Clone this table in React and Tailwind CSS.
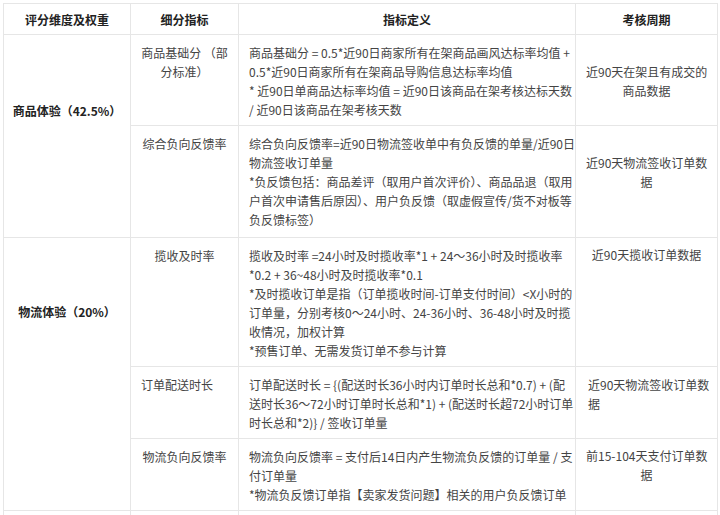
const rows1 = [
  {
    sub: ["商品基础分 （部", "分标准）"],
    subAlign: "text-center",
    def: [
      "商品基础分 = 0.5*近90日商家所有在架商品画风达标率均值 +",
      "0.5*近90日商家所有在架商品导购信息达标率均值",
      "* 近90日单商品达标率均值 = 近90日该商品在架考核达标天数",
      "/ 近90日该商品在架考核天数",
    ],
    period: ["近90天在架且有成交的", "商品数据"],
    periodCls: "text-center pt-[27px]",
    h: "h-[91px]",
  },
  {
    sub: ["综合负向反馈率"],
    subAlign: "text-center",
    def: [
      "综合负向反馈率=近90日物流签收单中有负反馈的单量/近90日",
      "物流签收订单量",
      "*负反馈包括：商品差评（取用户首次评价）、商品品退（取用",
      "户首次申请售后原因）、用户负反馈（取虚假宣传/货不对板等",
      "负反馈标签）",
    ],
    period: ["近90天物流签收订单数", "据"],
    periodCls: "text-center pt-[27px]",
    h: "h-[112px]",
  },
];

const rows2 = [
  {
    sub: ["揽收及时率"],
    subAlign: "text-center",
    def: [
      "揽收及时率 =24小时及时揽收率*1 + 24～36小时及时揽收率",
      "*0.2 + 36~48小时及时揽收率*0.1",
      "*及时揽收订单是指（订单揽收时间-订单支付时间）<X小时的",
      "订单量，分别考核0～24小时、24-36小时、36-48小时及时揽",
      "收情况，加权计算",
      "*预售订单、无需发货订单不参与计算",
    ],
    period: ["近90天揽收订单数据"],
    periodCls: "text-center pt-[7px]",
    h: "h-[128px]",
  },
  {
    sub: ["订单配送时长"],
    subAlign: "text-left",
    def: [
      "订单配送时长 = {(配送时长36小时内订单时长总和*0.7) + (配",
      "送时长36～72小时订单时长总和*1) + (配送时长超72小时订单",
      "时长总和*2)} / 签收订单量",
    ],
    period: ["近90天物流签收订单数", "据"],
    periodCls: "text-left pl-[12px] pt-[8px]",
    h: "h-[72px]",
  },
  {
    sub: ["物流负向反馈率"],
    subAlign: "text-center",
    def: [
      "物流负向反馈率 = 支付后14日内产生物流负反馈的订单量 / 支",
      "付订单量",
      "*物流负反馈订单指【卖家发货问题】相关的用户负反馈订单",
    ],
    period: ["前15-104天支付订单数", "据"],
    periodCls: "text-center pt-[7px]",
    h: "h-[71px]",
  },
];

const cell = "border border-[#e6e6e6] align-top px-[10px] pb-[6px]";

const Lines = ({ lines }) =>
  lines.map((l, i) => (
    <div key={i} className="whitespace-nowrap">
      {l}
    </div>
  ));

const Rows = ({ data, group, groupPad }) =>
  data.map((r, i) => (
    <tr key={i} className={r.h}>
      {i === 0 && (
        <td
          rowSpan={data.length}
          className={`border border-[#e6e6e6] align-top px-[4px] whitespace-nowrap ${groupPad} text-center font-bold text-[#222]`}
        >
          {group}
        </td>
      )}
      <td className={`${cell} pt-[8px] ${r.subAlign}`}>
        <Lines lines={r.sub} />
      </td>
      <td className={`${cell} pt-[8px] text-left`}>
        <Lines lines={r.def} />
      </td>
      <td className={`${cell} ${r.periodCls}`}>
        <Lines lines={r.period} />
      </td>
    </tr>
  ));

export default function App() {
  return (
    <div className="w-[720px] h-[515px] overflow-hidden bg-white pt-[3px] pl-[3px] font-['Noto_Sans_CJK_SC','Microsoft_YaHei',sans-serif] text-[12px] leading-[19px] text-[#444]">
      <table className="table-fixed border-collapse w-[714px]">
        <colgroup>
          <col className="w-[127px]" />
          <col className="w-[108px]" />
          <col className="w-[337px]" />
          <col className="w-[142px]" />
        </colgroup>
        <thead>
          <tr className="h-[31px] font-bold text-[#222]">
            <th className="border border-[#e6e6e6] text-center">评分维度及权重</th>
            <th className="border border-[#e6e6e6] text-center">细分指标</th>
            <th className="border border-[#e6e6e6] text-center">指标定义</th>
            <th className="border border-[#e6e6e6] text-center">考核周期</th>
          </tr>
        </thead>
        <tbody>
          <Rows data={rows1} group="商品体验（42.5%）" groupPad="pt-[66px]" />
          <Rows data={rows2} group="物流体验（20%）" groupPad="pt-[64px]" />
          <tr className="h-[30px]">
            <td className="border border-[#e6e6e6]"></td>
            <td className="border border-[#e6e6e6]"></td>
            <td className="border border-[#e6e6e6]"></td>
            <td className="border border-[#e6e6e6]"></td>
          </tr>
        </tbody>
      </table>
    </div>
  );
}
